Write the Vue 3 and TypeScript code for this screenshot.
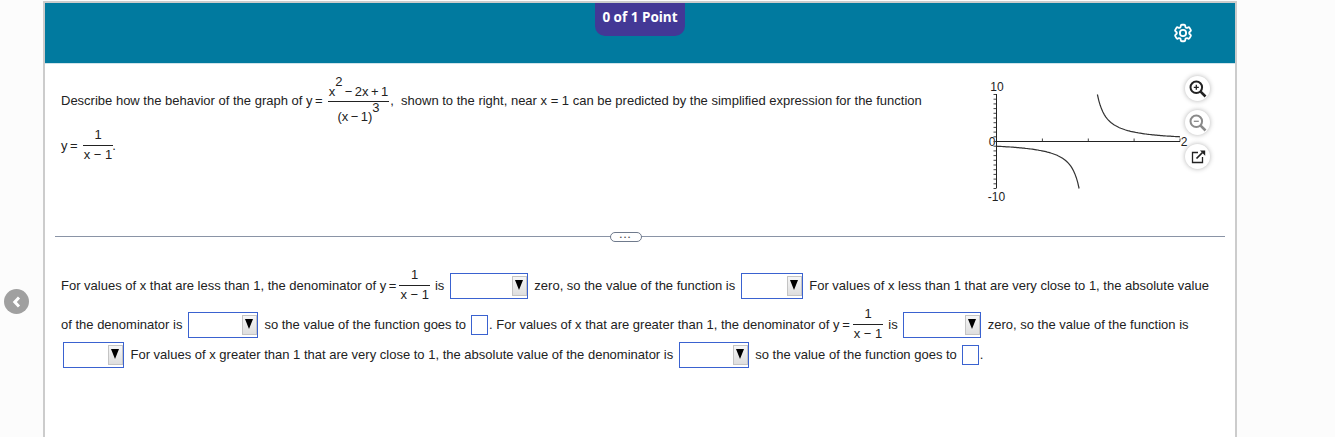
<template>
  <div class="page">
    <button class="back-btn" aria-label="Back">
      <svg width="14" height="14" viewBox="0 0 14 14"><path d="M9 2.5 4.8 7 9 11.5" fill="none" stroke="#fff" stroke-width="3" /></svg>
    </button>

    <section class="panel">
      <header class="panel-head">
        <span />
        <div class="score">0 of 1 Point</div>
        <div class="head-right">
          <svg width="22" height="22" viewBox="0 0 24 24" fill="none" stroke="#fff" stroke-width="2" stroke-linejoin="round">
            <path d="M9.594 3.94c.09-.542.56-.94 1.11-.94h2.593c.55 0 1.02.398 1.11.94l.213 1.281c.063.374.313.686.645.87.074.04.147.083.22.127.325.196.72.257 1.075.124l1.217-.456a1.125 1.125 0 0 1 1.37.49l1.296 2.247a1.125 1.125 0 0 1-.26 1.431l-1.003.827c-.293.241-.438.613-.43.992a7.723 7.723 0 0 1 0 .255c-.008.378.137.75.43.991l1.004.827c.424.35.534.955.26 1.43l-1.298 2.247a1.125 1.125 0 0 1-1.369.491l-1.217-.456c-.355-.133-.75-.072-1.076.124a6.47 6.47 0 0 1-.22.128c-.331.183-.581.495-.644.869l-.213 1.281c-.09.543-.56.94-1.11.94h-2.594c-.55 0-1.019-.398-1.11-.94l-.213-1.281c-.062-.374-.312-.686-.644-.87a6.52 6.52 0 0 1-.22-.127c-.325-.196-.72-.257-1.076-.124l-1.217.456a1.125 1.125 0 0 1-1.369-.49l-1.297-2.247a1.125 1.125 0 0 1 .26-1.431l1.004-.827c.292-.24.437-.613.43-.991a6.932 6.932 0 0 1 0-.255c.007-.38-.138-.751-.43-.992l-1.004-.827a1.125 1.125 0 0 1-.26-1.43l1.297-2.247a1.125 1.125 0 0 1 1.37-.491l1.216.456c.356.133.751.072 1.076-.124.072-.044.146-.086.22-.128.332-.183.582-.495.644-.869l.214-1.28Z" />
            <circle cx="12" cy="12" r="3.4" />
          </svg>
        </div>
      </header>

      <div class="question">
        <div class="prompt">
          <div class="line first">
            <span class="eq">Describe how the behavior of the graph of <span class="ye">y =</span></span>
            <span class="frac big">
              <span class="num">x<sup>2</sup> − 2x + 1</span>
              <span class="den">(x − 1)<sup>3</sup></span>
            </span>
            <span class="after-comma">,&nbsp; shown to the right, near x = 1 can be predicted by the simplified expression for the function</span>
          </div>
          <div class="line second">
            <span class="eq"><span class="ye">y =</span></span>
            <span class="frac">
              <span class="num">1</span>
              <span class="den">x − 1</span>
            </span>
            <span class="dot">.</span>
          </div>
        </div>

        <div class="figure">
          <svg class="plot" width="206" height="125" viewBox="980 78 206 125">
            <g fill="#222" font-family="'Liberation Sans', Arial, sans-serif" font-size="12">
              <text x="997" y="90.5" text-anchor="middle">10</text>
              <text x="992" y="145.5" text-anchor="middle">0</text>
              <text x="996.5" y="200.5" text-anchor="middle">-10</text>
              <text x="1184" y="145.5" text-anchor="middle">2</text>
            </g>
            <path :d="tickPath" fill="none" stroke="#444" stroke-width="1" />
            <path d="M996.5 94V188M996.5 141.5H1180" fill="none" stroke="#222" stroke-width="1" />
            <path :d="curveLeft" fill="none" stroke="#333" stroke-width="1.2" />
            <path :d="curveRight" fill="none" stroke="#333" stroke-width="1.2" />
          </svg>
          <div class="tools">
            <button class="tool" aria-label="Zoom in">
              <svg width="20" height="20" viewBox="0 0 20 20" fill="none" stroke="#222" stroke-width="2">
                <circle cx="8.3" cy="8.3" r="5.8" />
                <path d="M5.8 8.3h5M8.3 5.8v5" stroke-width="1.3" />
                <path d="M12.6 12.6 17.5 17.5" stroke-width="2.6" />
              </svg>
            </button>
            <button class="tool" aria-label="Zoom out">
              <svg width="20" height="20" viewBox="0 0 20 20" fill="none" stroke="#8a8a8a" stroke-width="2">
                <circle cx="8.3" cy="8.3" r="5.8" />
                <path d="M5.8 8.3h5" stroke-width="1.3" />
                <path d="M12.6 12.6 17.5 17.5" stroke-width="2.6" />
              </svg>
            </button>
            <button class="tool" aria-label="Open in new window">
              <svg width="20" height="20" viewBox="0 0 20 20" fill="none" stroke="#222" stroke-width="1.3">
                <path d="M10 5.5H4.5v10h10V10" />
                <path d="M8.5 11.5 14.5 5.5" stroke-width="1.7" />
                <path d="M12 3.6h5.2v5.2z" fill="#222" stroke="none" />
              </svg>
            </button>
          </div>
        </div>
      </div>

      <div class="divider"><span class="more">•••</span></div>

      <div class="answers">
        <div class="line a1">
          <span class="eq lead">For values of x that are less than 1, the denominator of <span class="ye">y =</span></span>
          <span class="frac"><span class="num">1</span><span class="den">x − 1</span></span>
          <span>is</span>
          <span class="drop w78"><i /></span>
          <span>zero, so the value of the function is</span>
          <span class="drop w62"><i /></span>
          <span>For values of x less than 1 that are very close to 1, the absolute value</span>
        </div>
        <div class="line a2">
          <span>of the denominator is</span>
          <span class="drop w70"><i /></span>
          <span>so the value of the function goes to</span>
          <span class="blank" />
          <span class="tight eq lead">. For values of x that are greater than 1, the denominator of <span class="ye">y =</span></span>
          <span class="frac"><span class="num">1</span><span class="den">x − 1</span></span>
          <span>is</span>
          <span class="drop w78"><i /></span>
          <span>zero, so the value of the function is</span>
        </div>
        <div class="line a3">
          <span class="drop w61 inset"><i /></span>
          <span>For values of x greater than 1 that are very close to 1, the absolute value of the denominator is</span>
          <span class="drop w70"><i /></span>
          <span>so the value of the function goes to</span>
          <span class="blank" />
          <span class="tight">.</span>
        </div>
      </div>
    </section>
  </div>
</template>

<script setup lang="ts">
import { computed } from 'vue'

// plot scale: x 0..2, y -10..10
const originX = 996.5
const originY = 141.5
const unitX = 91.75
const unitY = 4.7

const toPx = (x: number, y: number) =>
  `${(originX + x * unitX).toFixed(1)} ${(originY - y * unitY).toFixed(1)}`

const buildCurve = (from: number, to: number) => {
  const pts: string[] = []
  const steps = 60
  for (let i = 0; i <= steps; i++) {
    const x = from + ((to - from) * i) / steps
    pts.push(toPx(x, 1 / (x - 1)))
  }
  return 'M' + pts.join('L')
}

const curveLeft = computed(() => buildCurve(0, 0.9))
const curveRight = computed(() => buildCurve(1.1, 2))

const tickPath = computed(() => {
  let d = ''
  for (let i = -10; i <= 10; i++) {
    const y = originY - i * unitY
    d += `M${originX - 3} ${y.toFixed(1)}H${originX}`
  }
  for (let i = 1; i <= 4; i++) {
    const x = originX + i * 0.5 * unitX
    d += `M${x.toFixed(1)} ${originY - 3}V${originY}`
  }
  return d
})
</script>

<style>
html,
body {
  margin: 0;
  background: #fcfcfc;
}
</style>

<style scoped>
.page {
  position: relative;
  height: 437px;
  overflow: hidden;
  padding-left: 43px;
  font-family: 'Liberation Sans', Arial, sans-serif;
  font-size: 13px;
  color: #222;
}

.back-btn {
  position: absolute;
  left: 4px;
  top: 289px;
  width: 25px;
  height: 25px;
  padding: 0;
  border: 0;
  border-radius: 50%;
  background: #a0a0a0;
  display: flex;
  align-items: center;
  justify-content: center;
}

.panel {
  width: 1190px;
  height: 436px;
  margin-top: 1px;
  border: 2px solid #ccc;
  border-bottom: 0;
  background: #fff;
  display: flex;
  flex-direction: column;
}

.panel-head {
  height: 60px;
  flex: none;
  background: #017a9f;
  display: grid;
  grid-template-columns: 1fr auto 1fr;
  align-items: start;
  border-bottom: 1px solid #cfe3ea;
  box-sizing: content-box;
}

.score {
  width: 90px;
  height: 33px;
  box-sizing: border-box;
  padding-top: 5px;
  text-align: center;
  background: #433896;
  border-radius: 0 0 10px 10px;
  color: #fff;
  font-family: 'Open Sans', sans-serif;
  font-weight: 700;
  font-size: 13.5px;
  line-height: 19px;
}

.head-right {
  display: flex;
  justify-content: flex-end;
  padding: 19px 41px 0 0;
}

.question {
  height: 172px;
  flex: none;
  display: flex;
  justify-content: space-between;
}

.prompt {
  padding: 11px 0 0 16px;
}

.line {
  display: flex;
  align-items: center;
  gap: 5px;
  white-space: nowrap;
}

.line.first {
  height: 50px;
  gap: 4px;
}

.line.second {
  margin-top: 4px;
  height: 32px;
  gap: 4px;
}

.after-comma {
  margin-left: -3px;
}

.dot {
  margin-left: -5px;
}

/* the "y =" before a fraction is set tighter than running text */
.ye {
  word-spacing: -1px;
}

.eq {
  margin-right: 1px;
}

.eq.lead {
  margin-right: -2px;
}

.frac {
  display: inline-flex;
  flex-direction: column;
  align-items: center;
  text-align: center;
  line-height: 15px;
  margin-bottom: 1px;
}

.frac .num {
  display: block;
  padding: 0 1px 3px;
  border-bottom: 1px solid #222;
  align-self: stretch;
}

.frac .den {
  display: block;
  padding: 1px 1px 0;
}

.frac.big {
  margin-bottom: 0;
  word-spacing: -1.2px;
}

.frac.big .num {
  padding: 5px 1px 2px;
}

.frac.big .den {
  padding: 6px 1px 0;
}

sup {
  font-size: 13px;
  line-height: 0;
  vertical-align: 10px;
}

.frac.big .den sup {
  vertical-align: 9px;
}

.figure {
  display: flex;
  align-items: flex-start;
  padding: 14px 25px 0 0;
}

.plot {
  display: block;
  overflow: visible;
}

.tools {
  display: flex;
  flex-direction: column;
  gap: 9px;
  margin: -2px 0 0 -1px;
}

.tool {
  width: 25px;
  height: 25px;
  padding: 0;
  border: 0;
  border-radius: 50%;
  background: #fff;
  box-shadow: 0 0 5px rgba(0, 0, 0, 0.3);
  display: flex;
  align-items: center;
  justify-content: center;
}

.divider {
  height: 1px;
  margin: 0 10px;
  flex: none;
  background: #8a94a6;
  display: flex;
  align-items: center;
  justify-content: center;
}

.more {
  width: 30px;
  height: 8px;
  margin-right: 28px;
  border: 1px solid #6f7a8c;
  border-radius: 5px;
  background: #fff;
  color: #555;
  font-size: 6px;
  line-height: 8px;
  letter-spacing: 2px;
  text-align: center;
}

.answers {
  padding: 26px 0 0 16px;
}

.line.a1 {
  height: 44px;
}

.line.a2 {
  height: 32px;
  margin-top: 1px;
}

.line.a3 {
  height: 26px;
  margin-top: 1px;
}

.tight {
  margin-left: -4px;
}

.drop {
  display: inline-block;
  position: relative;
  flex: none;
  height: 26px;
  margin: 2px 1.5px 0 0.5px;
  box-sizing: border-box;
  border: 1px solid #3a62d0;
  background: #fff;
}

.drop i {
  position: absolute;
  top: 2px;
  right: 0;
  width: 15px;
  height: 20px;
  background: linear-gradient(#f6f6f6, #dedede);
  border: 1px solid #c4c4c4;
  box-sizing: border-box;
}

.drop i::after {
  content: '';
  position: absolute;
  left: 2px;
  top: 3px;
  border-left: 4.5px solid transparent;
  border-right: 4.5px solid transparent;
  border-top: 10px solid #000;
}

.inset { margin-left: 2px; }
.w61 { width: 61px; }
.w62 { width: 62px; }
.w70 { width: 70px; }
.w78 { width: 78px; }

.blank {
  flex: none;
  width: 17px;
  height: 20px;
  margin-top: 2px;
  box-sizing: border-box;
  border: 1px solid #3a62d0;
  background: #fff;
}
</style>
